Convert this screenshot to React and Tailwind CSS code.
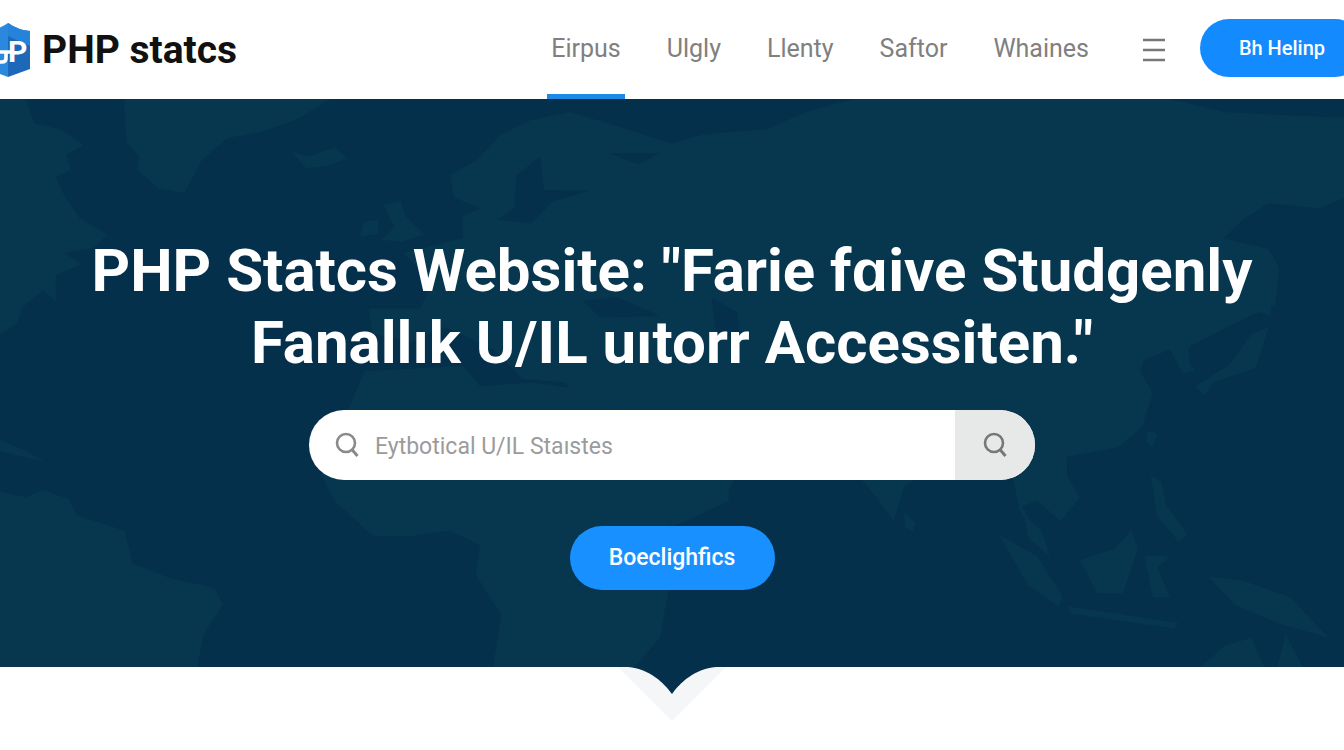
import React, { useState } from "react";

const NAV_ITEMS = ["Eirpus", "Ulgly", "Llenty", "Saftor", "Whaines"];

const Logo = () => (
  <svg width="46" height="56" viewBox="0 0 46 56" className="shrink-0" aria-hidden="true">
    <path d="M24 1 Q14 8 2 9 V47 L24 55 Z" fill="#2a89df" />
    <path d="M24 1 Q34 8 46 9 V47 L24 55 Z" fill="#1b69b8" />
    <path d="M24 1 Q34 8 46 9 V24 L24 14 Z" fill="#2583d9" />
    <path d="M12 30 H28 M22 30 V36 Q22 40 18 40 H12" fill="none" stroke="#fff" strokeWidth="3.6" />
    <text x="24" y="40" fill="#fff" fontFamily="Roboto, sans-serif" fontWeight="700" fontSize="30">
      P
    </text>
  </svg>
);

const SearchIcon = ({ className }) => (
  <svg width="24" height="26" viewBox="0 0 24 26" fill="none" stroke="currentColor" strokeWidth="2.6" className={className} aria-hidden="true">
    <circle cx="11" cy="11" r="9" />
    <path d="M16.5 17 L22.5 24" strokeWidth="3" />
  </svg>
);

const WorldMap = () => (
  <svg
    viewBox="0 24 3136 1535"
    preserveAspectRatio="none"
    className="absolute inset-0 h-full w-full"
    fill="#07364f"
    aria-hidden="true"
  >
    {/* Americas */}
    <path d="M0 24 L60 24 L80 90 L140 105 L195 150 L155 175 L165 215 L130 235 L150 285 L185 345 L250 390 L220 425 L150 440 L190 470 L130 500 L130 570 L100 540 L50 590 L40 630 L0 660Z" />
    <path d="M0 945 L60 975 L105 1005 L50 990 L0 975Z" />
    <path d="M0 1085 L60 1100 L100 1080 L160 1105 L180 1150 L290 1190 L310 1280 L400 1320 L500 1345 L520 1390 L475 1470 L460 1560 L0 1560Z" />
    {/* Greenland and Iceland */}
    <path d="M290 24 L770 24 L700 75 L620 110 L530 130 L470 190 L430 278 L370 265 L320 215 L325 180 L295 140Z" />
    <path d="M680 165 L720 180 L780 155 L810 185 L760 205 L715 212Z" />
    {/* British isles */}
    <path d="M895 310 L935 300 L945 340 L990 390 L940 410 L890 405 L920 370Z" />
    <path d="M850 355 L885 350 L880 390 L840 395Z" />
    {/* Eurasia */}
    <path d="M1050 230 L1110 190 L1170 120 L1240 80 L1330 60 L1420 90 L1568 145 L1640 120 L1790 105 L1880 60 L1990 24 L2730 24 L2860 60 L3136 75 L3136 290 L3080 320 L2960 305 L2900 350 L2855 400 L2960 430 L2985 480 L2975 580 L2890 625 L2780 690 L2760 720 L2790 760 L2760 765 L2730 700 L2670 730 L2660 760 L2690 820 L2665 910 L2610 965 L2490 990 L2490 1045 L2520 1100 L2475 1165 L2420 1110 L2385 1125 L2420 1200 L2380 1140 L2365 1055 L2270 1000 L2200 1000 L2110 1070 L2085 1165 L2045 1100 L2000 1040 L1890 1010 L1760 960 L1700 1080 L1700 1110 L1610 1160 L1570 1180 L1400 960 L1320 790 L1220 780 L1150 700 L1040 640 L960 680 L870 660 L860 590 L980 590 L1010 520 L940 440 L1080 400 L1080 340 L1120 320 L1060 290Z" />
    {/* Africa */}
    <path d="M850 760 L1080 745 L1120 800 L1240 790 L1420 820 L1480 960 L1568 1180 L1680 1180 L1560 1350 L1540 1480 L1480 1560 L1150 1560 L1170 1420 L1110 1310 L1120 1230 L1050 1190 L960 1205 L870 1205 L780 1110 L750 1040 L800 900Z" />
    {/* Asian islands */}
    <path d="M2740 700 L2770 690 L2780 760 L2750 750Z" />
    <path d="M2790 800 L2870 740 L2920 660 L2960 640 L2930 750 L2830 790 L2810 825Z" />
    <path d="M2935 440 L2965 500 L2965 610 L2940 600Z" />
    <path d="M2680 920 L2700 930 L2690 965 L2675 950Z" />
    <path d="M2685 1040 L2710 1060 L2720 1120 L2770 1200 L2750 1220 L2700 1150Z" />
    <path d="M2330 1200 L2420 1260 L2480 1370 L2470 1395 L2400 1340Z" />
    <path d="M2390 1150 L2430 1190 L2450 1260 L2400 1210Z" />
    <path d="M2520 1270 L2600 1240 L2640 1190 L2655 1240 L2620 1360 L2560 1360Z" />
    <path d="M2670 1260 L2730 1260 L2700 1290 L2730 1370 L2690 1370Z" />
    <path d="M2490 1395 L2750 1440 L2740 1455 L2500 1415Z" />
    <path d="M2820 1315 L2900 1325 L3010 1370 L3100 1480 L2980 1440 L2880 1390Z" />
    <path d="M2800 1560 L2860 1500 L2920 1480 L2950 1560Z" />
    <path d="M2980 1560 L3000 1470 L3040 1560Z" />
    <path d="M2110 1140 L2135 1170 L2130 1195 L2112 1180Z" />
    {/* Inland seas */}
    <g fill="#05304c">
      <path d="M1160 350 L1200 320 L1205 230 L1260 180 L1270 270 L1375 272 L1290 300 L1240 360Z" />
      <path d="M1420 170 L1540 170 L1490 200Z" />
      <path d="M1360 570 L1440 560 L1540 610 L1400 615Z" />
      <path d="M1660 560 L1720 600 L1730 680 L1670 650Z" />
    </g>
  </svg>
);

const App = () => {
  const [query, setQuery] = useState("");
  const [active, setActive] = useState("Eirpus");

  return (
    <div className="min-h-screen overflow-x-hidden bg-white font-[Roboto,sans-serif]">
      {/* Header */}
      <header className="flex h-[99px] items-stretch justify-between overflow-hidden">
        <a href="#" className="-ml-4 flex items-center gap-3 text-[#111]">
          <Logo />
          <span className="text-[39px] leading-[48px] font-bold">PHP statcs</span>
        </a>

        <div className="-mr-5 flex items-stretch">
          <nav className="flex items-stretch gap-[38px]">
            {NAV_ITEMS.map((item) => (
              <a
                key={item}
                href="#"
                onClick={() => setActive(item)}
                className={`flex items-center border-b-[5px] px-1 pt-1 text-[25px] text-[#808080] ${
                  active === item ? "border-[#1e88e5]" : "border-transparent"
                }`}
              >
                {item}
              </a>
            ))}
          </nav>
          <button type="button" aria-label="Menu" className="mr-[35px] ml-[50px] text-[#777]">
            <svg width="22" height="24" viewBox="0 0 22 24" stroke="currentColor" strokeWidth="2.5">
              <path d="M0 2 H22 M0 12 H22 M0 22 H22" />
            </svg>
          </button>
          <button
            type="button"
            className="mb-1 h-[58px] w-[164px] self-center rounded-full bg-[#148aff] text-[20px] font-medium text-white"
          >
            Bh Helinp
          </button>
        </div>
      </header>

      {/* Hero */}
      <main>
        <section className="relative bg-[#05304c]">
          <WorldMap />
          <div className="relative flex flex-col items-center px-6 pt-[136px] pb-[77px]">
            <h1 className="text-center text-[60px] leading-[72px] font-bold text-white">
              PHP Statcs Website: ″Farie fɑive Studgenly
              <br />
              Fanallık U/IL uıtorr Accessiten.″
            </h1>

            <form
              onSubmit={(e) => e.preventDefault()}
              className="mt-[31px] flex h-[70px] w-full max-w-[726px] overflow-hidden rounded-full bg-white"
            >
              <label htmlFor="search" className="flex items-center pr-4 pl-[26px] text-[#8a8a8a]">
                <SearchIcon />
              </label>
              <input
                id="search"
                type="text"
                aria-label="Search"
                value={query}
                onChange={(e) => setQuery(e.target.value)}
                placeholder="Eytbotical U/IL Staıstes"
                className="min-w-0 flex-1 pt-1 text-[23px] text-gray-800 outline-none placeholder:text-[#9b9b9b]"
              />
              <button
                type="submit"
                aria-label="Search"
                className="flex w-20 items-center justify-center bg-[#e7e8e8] text-[#777]"
              >
                <SearchIcon />
              </button>
            </form>

            <button
              type="button"
              className="mt-[46px] h-16 w-[205px] rounded-full bg-[#1890ff] text-[23px] font-medium text-white"
            >
              Boeclighfics
            </button>
          </div>
        </section>

        {/* Notch */}
        <svg width="108" height="54" viewBox="0 0 108 54" className="mx-auto block" aria-hidden="true">
          <path d="M0 0 H108 L54 54Z" fill="#f5f6f8" />
          <path d="M10 0 C32 2 46 16 54 27 C62 16 76 2 98 0Z" fill="#05304c" />
        </svg>
      </main>
    </div>
  );
};

export default App;
